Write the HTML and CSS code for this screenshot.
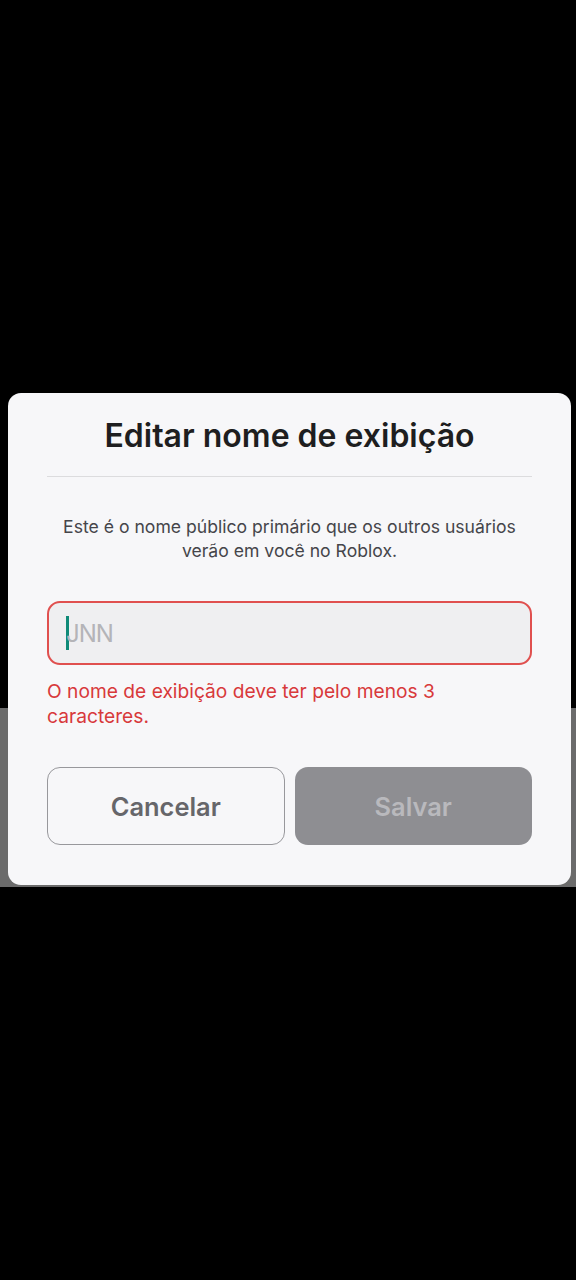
FILE: index.html
```html
<!DOCTYPE html>
<html lang="pt-BR">
<head>
<meta charset="utf-8">
<title>Editar nome de exibição</title>
<link rel="stylesheet" href="styles.css">
</head>
<body>
<div class="screen">
  <div class="dialog">
    <h1 class="title">Editar nome de exibição</h1>
    <hr class="divider">
    <p class="desc">Este é o nome público primário que os outros usuários verão em você no Roblox.</p>
    <div class="field">
      <span class="caret"></span>
      <span class="placeholder">JNN</span>
    </div>
    <p class="error">O nome de exibição deve ter pelo menos 3 caracteres.</p>
    <div class="actions">
      <button class="btn btn-cancel">Cancelar</button>
      <button class="btn btn-save">Salvar</button>
    </div>
  </div>
</div>
</body>
</html>
```

FILE: styles.css
```css
html, body {
  margin: 0;
  padding: 0;
}
body {
  width: 576px;
  height: 1280px;
  background: linear-gradient(to bottom, #000 0, #000 708px, #6b6b6b 708px, #6b6b6b 887px, #000 887px, #000 100%);
  font-family: Inter, "Noto Sans", Roboto, sans-serif;
}
.screen {
  padding-top: 393px;
}
.dialog {
  margin-left: 8px;
  width: 563px;
  box-sizing: border-box;
  background: #f7f7f9;
  border-radius: 13px;
  padding: 24px 39px 40px;
}
.title {
  margin: 0;
  text-align: center;
  font-size: 32px;
  line-height: 38px;
  font-weight: 600;
  color: #1e1e20;
  letter-spacing: 0;
  white-space: nowrap;
}
.divider {
  margin: 21px 0 0;
  border: 0;
  height: 1px;
  background: #dcdcde;
}
.desc {
  margin: 38px 0 0;
  text-align: center;
  font-size: 17.6px;
  line-height: 24px;
  color: #45454a;
  padding: 0;
}
.field {
  margin-top: 38px;
  height: 64px;
  box-sizing: border-box;
  border: 2px solid #e0504f;
  border-radius: 13px;
  background: #efeff1;
  display: flex;
  align-items: center;
  padding-left: 17px;
}
.caret {
  width: 3px;
  height: 34px;
  background: #0f8a78;
}
.placeholder {
  font-size: 24px;
  color: #b4b4b8;
  margin-left: -3px;
  letter-spacing: -1px;
}
.error {
  margin: 14px 0 0;
  font-size: 19.2px;
  line-height: 25px;
  color: #d8393b;
  padding-right: 60px;
}
.actions {
  margin-top: 38px;
  display: grid;
  grid-template-columns: 1fr 1fr;
  gap: 10px;
}
.btn {
  height: 78px;
  border-radius: 13px;
  font-family: inherit;
  font-size: 25.4px;
  font-weight: 600;
  box-sizing: border-box;
}
.btn-cancel {
  background: #f7f7f9;
  border: 1.5px solid #98989c;
  color: #66666a;
}
.btn-save {
  background: #8e8e92;
  border: 0;
  color: #b9b9bd;
}
```
